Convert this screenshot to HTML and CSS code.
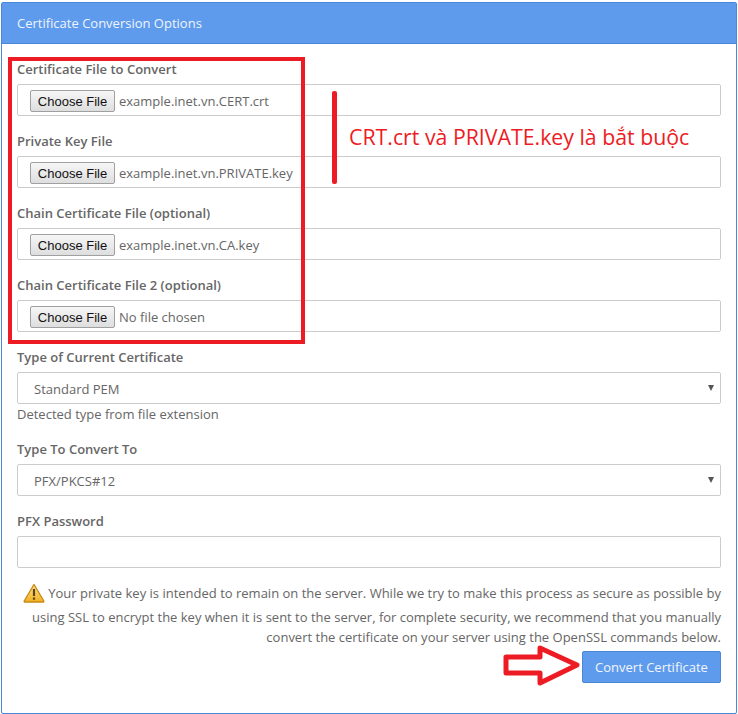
FILE: index.html

```html
<!DOCTYPE html>
<html lang="en">
<head>
  <meta charset="UTF-8">
  <title>Certificate Conversion Options</title>
  <link rel="stylesheet" href="styles.css">
</head>
<body>

  <div class="panel">
    <div class="panel-heading">Certificate Conversion Options</div>
    <form class="panel-body" onsubmit="return false">

      <div class="form-group">
        <label>Certificate File to Convert</label>
        <div class="form-control file-control"><button type="button" class="file-button">Choose File</button><span>example.inet.vn.CERT.crt</span></div>
      </div>

      <div class="form-group">
        <label>Private Key File</label>
        <div class="form-control file-control"><button type="button" class="file-button">Choose File</button><span>example.inet.vn.PRIVATE.key</span></div>
      </div>

      <div class="form-group">
        <label>Chain Certificate File (optional)</label>
        <div class="form-control file-control"><button type="button" class="file-button">Choose File</button><span>example.inet.vn.CA.key</span></div>
      </div>

      <div class="form-group">
        <label>Chain Certificate File 2 (optional)</label>
        <div class="form-control file-control"><button type="button" class="file-button">Choose File</button><span>No file chosen</span></div>
      </div>

      <div class="form-group">
        <label>Type of Current Certificate</label>
        <div class="select-wrap">
          <select class="form-control select-control">
            <option>Standard PEM</option>
          </select>
        </div>
        <p class="help-text">Detected type from file extension</p>
      </div>

      <div class="form-group">
        <label>Type To Convert To</label>
        <div class="select-wrap">
          <select class="form-control select-control">
            <option>PFX/PKCS#12</option>
          </select>
        </div>
      </div>

      <div class="form-group">
        <label>PFX Password</label>
        <input type="password" class="form-control">
      </div>

      <p class="note">
        <svg class="warn-icon" width="22" height="20" viewBox="0 0 22 20">
          <defs>
            <linearGradient id="warnFill" x1="0" y1="0" x2="0" y2="1">
              <stop offset="0" stop-color="#fde58a"/>
              <stop offset="1" stop-color="#f2b01e"/>
            </linearGradient>
          </defs>
          <path d="M11 1.5 L20.8 18 Q21 19 20 19 L2 19 Q1 19 1.2 18 Z" fill="url(#warnFill)" stroke="#c98a1b" stroke-width="1.4" stroke-linejoin="round"/>
          <path d="M11 6 L11 13" stroke="#5a4320" stroke-width="2.2"/>
          <rect x="9.9" y="14.5" width="2.2" height="2.2" fill="#5a4320"/>
        </svg>
        Your private key is intended to remain on the server. While we try to make this process as secure as possible by using SSL to encrypt the key when it is sent to the server, for complete security, we recommend that you manually convert the certificate on your server using the OpenSSL commands below.
      </p>

      <div class="actions">
        <button type="submit" class="btn-primary">Convert Certificate</button>
      </div>
    </form>

    <!-- red markup drawn on top of the screenshot -->
    <div class="mark-box"></div>
    <div class="mark-bar"></div>
    <div class="mark-text">CRT.crt và PRIVATE.key là bắt buộc</div>
    <svg class="mark-arrow" width="78" height="44" viewBox="0 0 78 44">
      <path d="M3 13 H37 V4 L74 21 L37 39 V29 H3 Z" fill="#fff" stroke="#ed1c24" stroke-width="5" stroke-linejoin="round"/>
    </svg>
  </div>

</body>
</html>
```

FILE: styles.css

```css
body {
  margin: 0;
  font-family: "Open Sans", sans-serif;
  font-size: 13px;
  color: #666;
  background-color: #fff;
}

.panel {
  position: relative;
  box-sizing: border-box;
  width: 736px;
  height: 712px;
  margin: 2px 0 0 1px;
  border: 1px solid #4a86d8;
  border-radius: 2px;
}

.panel-heading {
  box-sizing: border-box;
  height: 41px;
  padding: 0 15px;
  line-height: 40px;
  color: #eef4fd;
  background-color: #5f9bec;
  border-bottom: 1px solid #4a86d8;
}

.panel-body {
  padding: 15px 15px 0;
}

.form-group {
  margin-bottom: 15px;
}

label {
  display: block;
  height: 20px;
  margin-bottom: 5px;
  line-height: 20px;
  font-weight: 600;
  color: #666;
}

.form-control {
  display: block;
  box-sizing: border-box;
  width: 100%;
  height: 32px;
  border: 1px solid #ccc;
  border-radius: 2px;
  background-color: #fff;
  font-family: "Open Sans", sans-serif;
  font-size: 13px;
  color: #666;
}

.file-control {
  display: flex;
  align-items: center;
  padding: 2px 0 0 12px;
  gap: 4px;
}

.file-button {
  box-sizing: border-box;
  width: 85px;
  height: 22px;
  padding: 0;
  border: 1px solid #a0a0a0;
  border-radius: 2px;
  background: linear-gradient(#f6f6f6, #dedede);
  font-family: "Liberation Sans", Arial, sans-serif;
  font-size: 13px;
  color: #111;
}

.select-wrap {
  position: relative;
}

.select-wrap::after {
  content: "";
  position: absolute;
  right: 7px;
  top: 13px;
  border-style: solid;
  border-width: 6px 3px 0;
  border-color: #555 transparent transparent;
  pointer-events: none;
}

.select-control {
  padding: 2px 0 0 16px;
  appearance: none;
}

.help-text {
  margin: 0;
  line-height: 20px;
}

.note {
  margin: 0;
  padding-left: 4px;
  line-height: 20px;
  text-align: right;
}

.warn-icon {
  margin-bottom: 4px;
  vertical-align: -9px;
}

.actions {
  display: flex;
  justify-content: flex-end;
  margin-top: 4px;
}

.btn-primary {
  box-sizing: border-box;
  width: 139px;
  height: 32px;
  border: 1px solid #4a86d8;
  border-radius: 2px;
  background-color: #5f9bec;
  font-family: "Open Sans", sans-serif;
  font-size: 13px;
  color: #f2f6fd;
}

.mark-box {
  position: absolute;
  left: 6px;
  top: 54px;
  box-sizing: border-box;
  width: 297px;
  height: 287px;
  border: 4px solid #ed1c24;
}

.mark-bar {
  position: absolute;
  left: 330px;
  top: 88px;
  width: 5px;
  height: 93px;
  border-radius: 2px;
  background-color: #ed1c24;
}

.mark-text {
  position: absolute;
  left: 347px;
  top: 120px;
  font-size: 21.3px;
  line-height: 28px;
  color: #ed1c24;
  white-space: nowrap;
}

.mark-arrow {
  position: absolute;
  left: 501px;
  top: 641px;
}
```
